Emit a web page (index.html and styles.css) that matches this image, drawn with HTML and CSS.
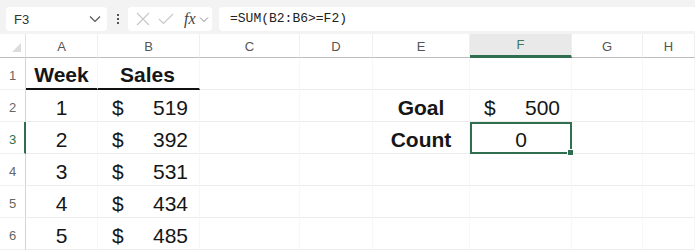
FILE: index.html
```html
<!DOCTYPE html>
<html lang="en">
<head>
    <meta charset="UTF-8">
    <title>Sheet</title>
    <link rel="stylesheet" href="styles.css">
</head>
<body>
    <div class="toolbar">
        <div class="namebox">
            <span>F3</span>
            <svg class="chev" width="12" height="8" viewBox="0 0 12 8"><path d="M1 1.5 L6 6.5 L11 1.5" fill="none" stroke="#555" stroke-width="1.2"/></svg>
        </div>
        <div class="dots"><i></i><i></i><i></i></div>
        <div class="iconbox">
            <svg width="14" height="14" viewBox="0 0 14 14"><path d="M1 1 L13 13 M13 1 L1 13" stroke="#c8c8c8" stroke-width="1.2"/></svg>
            <svg width="16" height="12" viewBox="0 0 16 12"><path d="M1 6 L5.5 10.5 L15 1" fill="none" stroke="#c8c8c8" stroke-width="1.2"/></svg>
            <span class="fx">fx</span>
            <svg width="10" height="7" viewBox="0 0 10 7"><path d="M1 1.5 L5 5.5 L9 1.5" fill="none" stroke="#888" stroke-width="1"/></svg>
        </div>
        <div class="formula">=SUM(B2:B6&gt;=F2)</div>
    </div>

    <div class="sheet">
        <div class="corner"><span class="tri"></span></div>
        <div class="colhead">A</div>
        <div class="colhead">B</div>
        <div class="colhead">C</div>
        <div class="colhead">D</div>
        <div class="colhead">E</div>
        <div class="colhead active">F</div>
        <div class="colhead">G</div>
        <div class="colhead">H</div>

        <div class="rowhead">1</div>
        <div class="cell bold center under">Week</div>
        <div class="cell bold under sales-h">Sales</div>
        <div class="cell"></div><div class="cell"></div><div class="cell"></div><div class="cell"></div><div class="cell"></div><div class="cell"></div>

        <div class="rowhead">2</div>
        <div class="cell center">1</div>
        <div class="cell money"><span>$</span><span>519</span></div>
        <div class="cell"></div><div class="cell"></div>
        <div class="cell bold center">Goal</div>
        <div class="cell money"><span>$</span><span>500</span></div>
        <div class="cell"></div><div class="cell"></div>

        <div class="rowhead active">3</div>
        <div class="cell center">2</div>
        <div class="cell money"><span>$</span><span>392</span></div>
        <div class="cell"></div><div class="cell"></div>
        <div class="cell bold center">Count</div>
        <div class="cell center selected">0<span class="handle"></span></div>
        <div class="cell"></div><div class="cell"></div>

        <div class="rowhead">4</div>
        <div class="cell center">3</div>
        <div class="cell money"><span>$</span><span>531</span></div>
        <div class="cell"></div><div class="cell"></div><div class="cell"></div><div class="cell"></div><div class="cell"></div><div class="cell"></div>

        <div class="rowhead">5</div>
        <div class="cell center">4</div>
        <div class="cell money"><span>$</span><span>434</span></div>
        <div class="cell"></div><div class="cell"></div><div class="cell"></div><div class="cell"></div><div class="cell"></div><div class="cell"></div>

        <div class="rowhead">6</div>
        <div class="cell center">5</div>
        <div class="cell money"><span>$</span><span>485</span></div>
        <div class="cell"></div><div class="cell"></div><div class="cell"></div><div class="cell"></div><div class="cell"></div><div class="cell"></div>
    </div>
</body>
</html>
```

FILE: styles.css
```css
body {
    margin: 0;
    background: #fff;
    font-family: "Liberation Sans", Arial, sans-serif;
    overflow: hidden;
}
.toolbar {
    height: 34px;
    background: #f3f3f3;
    display: flex;
    align-items: flex-start;
    padding-top: 7px;
    box-sizing: border-box;
}
.namebox {
    margin-left: 6px;
    width: 101px;
    height: 24px;
    background: #fff;
    border-radius: 4px;
    display: flex;
    align-items: center;
    justify-content: space-between;
    padding: 0 6px 0 8px;
    box-sizing: border-box;
    font-size: 13px;
    color: #333;
}
.dots {
    width: 21px;
    height: 24px;
    display: flex;
    flex-direction: column;
    align-items: center;
    justify-content: center;
    gap: 2px;
}
.dots i {
    width: 2px;
    height: 2px;
    background: #555;
    display: block;
}
.iconbox {
    width: 84px;
    height: 24px;
    background: #fff;
    border-radius: 4px;
    display: flex;
    align-items: center;
    gap: 8px;
    padding-left: 8px;
    box-sizing: border-box;
}
.fx {
    font-family: "Liberation Serif", serif;
    font-style: italic;
    font-size: 16px;
    color: #444;
    margin-left: 2px;
    margin-right: -5px;
}
.formula {
    margin-left: 7px;
    flex: 1;
    height: 24px;
    background: #fff;
    border-radius: 4px 0 0 4px;
    font-family: "Liberation Mono", monospace;
    font-size: 13px;
    color: #222;
    line-height: 24px;
    padding-left: 11px;
}
.sheet {
    display: grid;
    grid-template-columns: 26px 72px 102px 100px 73px 97px 102px 71px 1fr;
    grid-template-rows: 24px repeat(6, 32px);
}
.corner {
    border-right: 1px solid #e2e2e2;
    border-bottom: 1px solid #bdbdbd;
    position: relative;
}
.tri {
    position: absolute;
    right: 4px;
    bottom: 5px;
    width: 0;
    height: 0;
    border-left: 9px solid transparent;
    border-bottom: 9px solid #dcdcdc;
}
.colhead {
    border-bottom: 1px solid #bdbdbd;
    border-right: 1px solid #efefef;
    font-size: 13px;
    color: #555;
    text-align: center;
    line-height: 24px;
    padding-top: 1px;
    box-sizing: border-box;
}
.colhead.active {
    background: #e9e9e9;
    color: #3d7a5b;
    border-bottom: 3px solid #2f6f4f;
    line-height: 20px;
}
.rowhead {
    font-size: 13px;
    color: #666;
    border-right: 1px solid #d4d4d4;
    border-bottom: 1px solid #f0f0f0;
    display: flex;
    align-items: center;
    padding-left: 9px;
    padding-top: 3px;
    box-sizing: border-box;
}
.rowhead.active {
    border-right: 2px solid #2f6f4f;
    color: #2f6f4f;
}
.cell {
    border-right: 1px solid #f7f7f7;
    border-bottom: 1px solid #ececec;
    font-size: 21px;
    color: #161616;
    line-height: 31px;
    padding-top: 2px;
    box-sizing: border-box;
    white-space: nowrap;
}
.bold { font-weight: bold; }
.center { text-align: center; }
.under { border-bottom: 2px solid #111; line-height: 29px; }
.sales-h { padding-left: 22px; }
.money {
    display: flex;
    justify-content: space-between;
    padding-left: 14px;
    padding-right: 11px;
}
.selected {
    border: 2px solid #2f6f4f;
    line-height: 27px;
    position: relative;
}
.handle {
    position: absolute;
    right: -4px;
    bottom: -4px;
    width: 5px;
    height: 5px;
    background: #2f6f4f;
    border: 1px solid #fff;
}
```
